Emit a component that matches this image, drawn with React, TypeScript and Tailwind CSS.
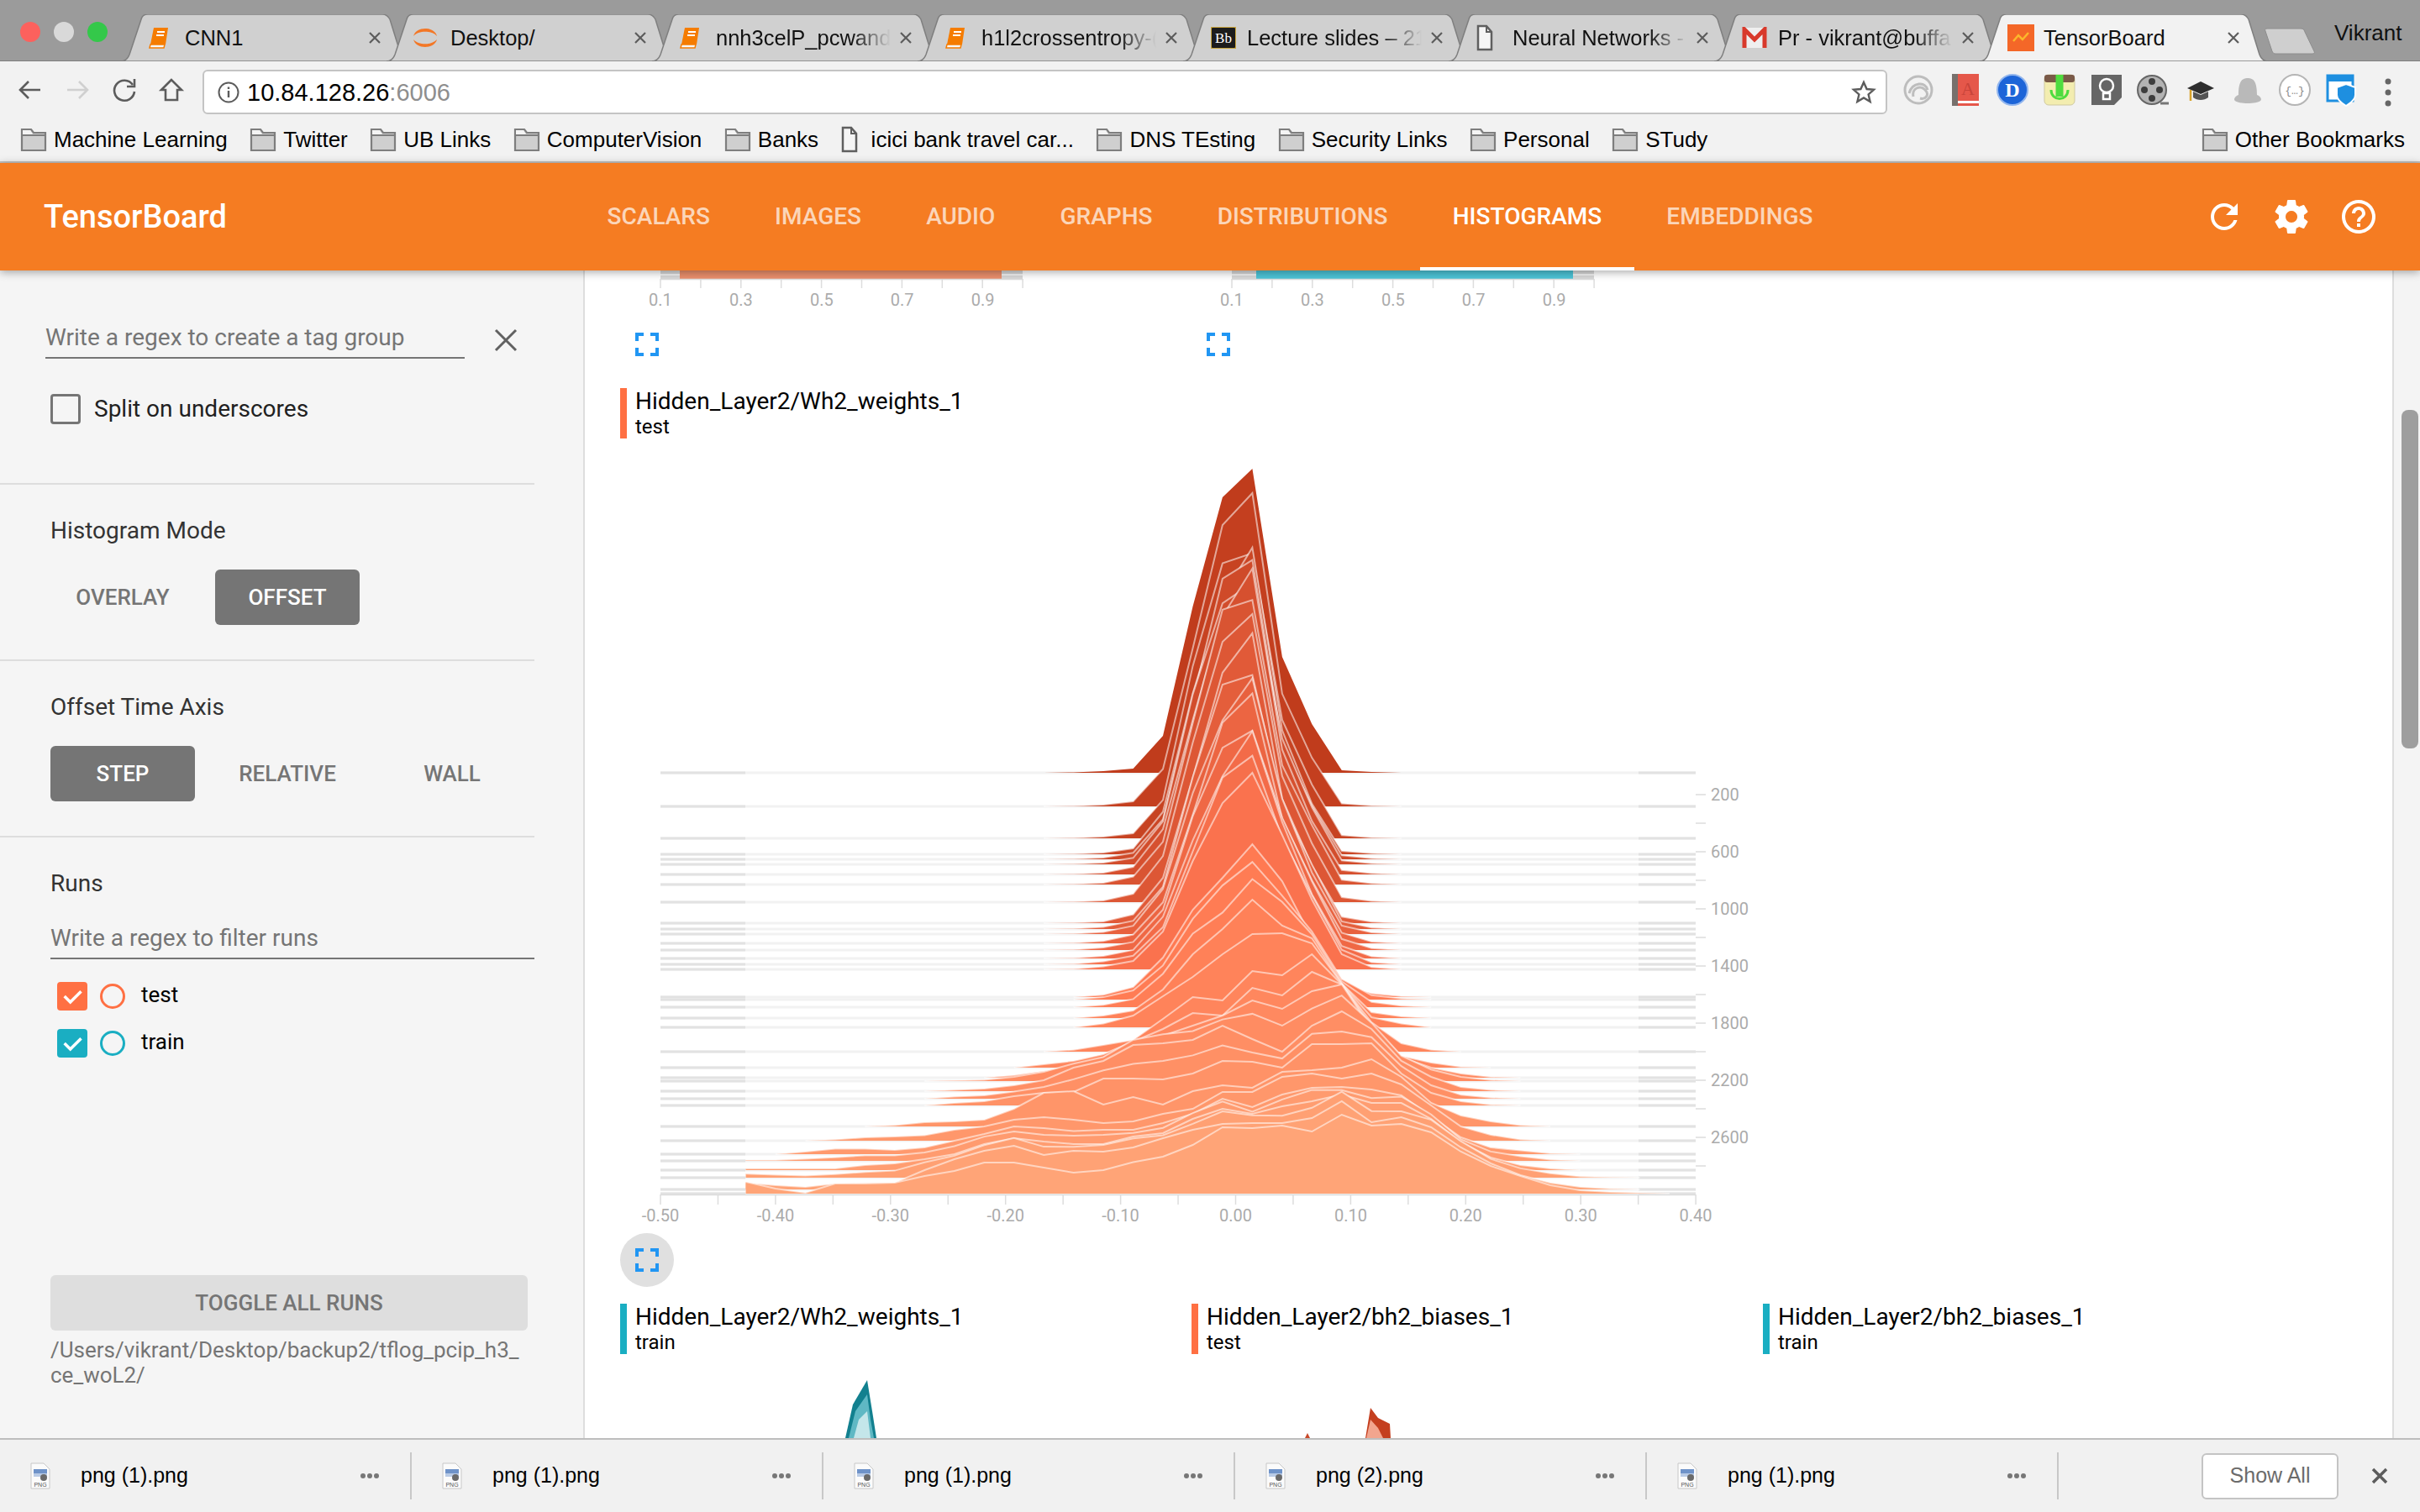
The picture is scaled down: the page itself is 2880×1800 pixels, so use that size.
import React from "react";

const tabs = [
  { title: "CNN1", icon: "book" },
  { title: "Desktop/", icon: "jupyter" },
  { title: "nnh3celP_pcwand", icon: "book", fade: true },
  { title: "h1l2crossentropy-(", icon: "book", fade: true },
  { title: "Lecture slides – 21", icon: "bb", fade: true },
  { title: "Neural Networks -", icon: "file", fade: true },
  { title: "Pr - vikrant@buffa", icon: "gmail", fade: true },
  { title: "TensorBoard", icon: "tb", active: true },
];

const bookmarks = [
  { label: "Machine Learning" },
  { label: "Twitter" },
  { label: "UB Links" },
  { label: "ComputerVision" },
  { label: "Banks" },
  { label: "icici bank travel car...", file: true },
  { label: "DNS TEsting" },
  { label: "Security Links" },
  { label: "Personal" },
  { label: "STudy" },
];

const navItems = ["SCALARS", "IMAGES", "AUDIO", "GRAPHS", "DISTRIBUTIONS", "HISTOGRAMS", "EMBEDDINGS"];
const downloads = ["png (1).png", "png (1).png", "png (1).png", "png (2).png", "png (1).png"];

// y of each histogram slice's baseline, back to front
const baselines = [
  920, 960, 998, 1017, 1023, 1029, 1041, 1053, 1074, 1099, 1106, 1112, 1123, 1131, 1141, 1148, 1154, 1187, 1190, 1199,
  1212, 1223, 1252, 1271, 1283, 1287, 1299, 1308, 1316, 1341, 1358, 1374, 1382, 1393, 1402, 1416, 1421,
];

// hand read slice outlines: heights above the baseline, per bin, starting at bin `from`
const keyRidges = [
  { i: 0, from: -7, h: [0, 0.5, 2, 5, 44, 198, 328, 362, 138, 58, 3, 1, 0] },
  { i: 8, from: -7, h: [0, 0.5, 2, 10, 55, 190, 310, 343, 150, 70, 6, 1.5, 0] },
  { i: 16, from: -7, h: [0, 0.5, 3.5, 10, 45, 129, 198, 234, 160, 83, 18, 2.7, 0] },
  { i: 17, from: -7, h: [0, 0, 2.7, 12, 47, 104, 142, 182, 138, 70, 15, 4.6, 1, 0] },
  { i: 20, from: -7, h: [0, 0, 3, 9, 34, 76, 106, 141, 110, 95, 41, 7, 2, 0] },
  { i: 21, from: -7, h: [0, 0, 4.6, 14, 37, 60, 87, 111, 112, 100, 52, 12, 4.6, 0] },
  { i: 22, from: -7, h: [0, 2.3, 8, 14, 39, 65, 61, 96, 91, 116, 80, 35, 10, 2.3, 0] },
  { i: 23, from: -8, h: [0, 4, 8, 16, 31, 46, 65, 62, 95, 86, 114, 99, 50, 14, 6, 1, 0] },
  { i: 24, from: -9, h: [0, 3, 8, 14, 24, 41, 50, 62, 74, 92, 82, 103, 111, 58, 24, 12, 5, 1, 0] },
  { i: 26, from: -11, h: [0, 1.5, 3, 7, 13, 28, 36, 55, 57, 61, 78, 62, 47, 78, 95, 74, 36, 17, 5, 1.5, 0] },
  { i: 28, from: -11, h: [0, 3, 5, 11, 15, 16, 32, 32, 31, 38, 53, 52, 45, 73, 73, 74, 38, 15, 5, 1, 0] },
  { i: 29, from: -13, h: [0, 1.5, 5, 6, 8, 21, 40, 42, 26, 35, 26, 42, 49, 46, 65, 67, 70, 80, 59, 28, 13, 6, 1.5, 0] },
  { i: 30, from: -15, h: [0, 1.5, 4, 5, 6.5, 13, 17, 25, 28, 25, 21, 23, 32, 38, 58, 58, 76, 80, 74, 80, 67, 42, 17, 7, 1.5, 0] },
  { i: 31, from: -16, h: [0, 3, 6.5, 6.5, 5, 8, 16, 24, 33, 31, 27.5, 29, 29, 37, 48, 66, 56, 71, 79, 80, 77, 70, 45, 20, 8, 4.6, 1, 0] },
  { i: 33, from: -17, h: [2, 2, 2, 2, 6, 8, 13, 19, 31, 38, 34, 31, 31, 40, 44, 61, 73, 67, 76, 82, 90, 80, 80, 61, 33, 15, 6, 2, 0] },
  { i: 35, from: -17, h: [8, 5, 3, 7, 8, 8, 23, 36, 46, 52, 41, 46, 45, 50, 61, 71, 78, 79, 79, 85, 105, 80, 86, 74, 50, 31, 17, 8, 3, 1, 0] },
  { i: 36, from: -17, h: [14, 6, 1, 12, 12, 13, 21, 27, 37, 37, 31, 25, 28, 37.5, 44, 58, 79, 78, 81, 74, 94, 81, 83, 73, 50, 33, 21, 10, 4, 2, 1, 0] },
];

const binX = (k: number) => 1490.4 + 35.46 * k;

function keyHeight(key: { from: number; h: number[] }, k: number) {
  const idx = k - key.from;
  return idx < 0 || idx >= key.h.length ? 0 : key.h[idx];
}

function ridgeHeights(i: number) {
  let a = keyRidges[0];
  let b = keyRidges[keyRidges.length - 1];
  for (let n = 0; n < keyRidges.length - 1; n++) {
    if (keyRidges[n].i <= i && keyRidges[n + 1].i >= i) {
      a = keyRidges[n];
      b = keyRidges[n + 1];
      break;
    }
  }
  const t = a.i === b.i ? 0 : (i - a.i) / (b.i - a.i);
  const isKey = t === 0 || t === 1;
  const out: [number, number][] = [];
  for (let k = -17; k <= 14; k++) {
    const base = keyHeight(a, k) * (1 - t) + keyHeight(b, k) * t;
    const wobble = isKey ? 1 : 1 + 0.05 * Math.sin(i * 2.3 + k * 1.7);
    out.push([k, base * wobble]);
  }
  return out;
}

function mix(c1: number[], c2: number[], t: number) {
  const p = c1.map((v, n) => Math.round(v + (c2[n] - v) * t));
  return `rgb(${p[0]},${p[1]},${p[2]})`;
}

function ridgeColor(i: number) {
  if (i <= 16) return mix([192, 60, 28], [250, 114, 78], i / 16);
  return mix([255, 122, 82], [255, 164, 119], (i - 17) / 19);
}

function Ridge({ i }: { i: number }) {
  const base = baselines[i];
  const heights = ridgeHeights(i);
  const first = heights.findIndex(([, h]) => h > 0);
  let last = heights.length - 1;
  while (last > 0 && heights[last][1] <= 0) last--;
  const from = Math.max(first - 1, 0);
  const to = Math.min(last + 1, heights.length - 1);
  const pts = heights.slice(from, to + 1).map(([k, h]) => `${binX(k).toFixed(1)},${(base - h).toFixed(1)}`);
  const startX = first === 0 ? binX(-17) : binX(heights[from][0]);
  const endX = binX(heights[to][0]);
  return (
    <g>
      <polygon points={`${startX},${base} ${pts.join(" ")} ${endX},${base}`} fill={ridgeColor(i)} />
      {i > 0 && <polyline points={pts.join(" ")} fill="none" stroke="#ffffff" strokeOpacity={0.55} strokeWidth={2} />}
    </g>
  );
}

function MainChart() {
  const xLabels = ["-0.50", "-0.40", "-0.30", "-0.20", "-0.10", "0.00", "0.10", "0.20", "0.30", "0.40"];
  const yLabels = ["200", "600", "1000", "1400", "1800", "2200", "2600"];
  return (
    <svg className="block w-[1400px] h-[946px]" viewBox="696 522 1400 946">
      {baselines.map((y, i) => (
        <g key={i}>
          <rect x={786} y={y - 1.5} width={1232} height={3} fill="#f2f2f2" />
          <rect x={786} y={y - 1.5} width={101} height={3} fill="#e2e2e2" />
          <rect x={1950} y={y - 1.5} width={68} height={3} fill="#e2e2e2" />
        </g>
      ))}
      {baselines.map((_, i) => (
        <Ridge key={i} i={i} />
      ))}
      <line x1={786} x2={2018} y1={1422.5} y2={1422.5} stroke="#dddddd" strokeWidth={1.5} />
      {Array.from({ length: 19 }).map((_, n) => (
        <line key={n} x1={786 + 68.45 * n} x2={786 + 68.45 * n} y1={1422} y2={1434} stroke="#dddddd" strokeWidth={1.5} />
      ))}
      {xLabels.map((l, n) => (
        <text key={l} x={786 + 136.9 * n} y={1454} textAnchor="middle" fontSize={20} fill="#ababab" fontFamily="Roboto, sans-serif">
          {l}
        </text>
      ))}
      {Array.from({ length: 14 }).map((_, n) => (
        <line key={n} x1={2018} x2={2030} y1={946 + 34 * n} y2={946 + 34 * n} stroke="#dddddd" strokeWidth={1.5} />
      ))}
      {yLabels.map((l, n) => (
        <text key={l} x={2036} y={953 + 68 * n} fontSize={20} fill="#ababab" fontFamily="Roboto, sans-serif">
          {l}
        </text>
      ))}
    </svg>
  );
}

function TopCharts() {
  const cards = [
    { dx: 0, a: 809, b: 1192, fill: "#ea8f6c" },
    { dx: 680, a: 815, b: 1192, fill: "#4cc3d6" },
  ];
  const labels = ["0.1", "0.3", "0.5", "0.7", "0.9"];
  return (
    <svg className="block w-[1400px] h-[74px]" viewBox="696 322 1400 74">
      {cards.map((c) => (
        <g key={c.dx} transform={`translate(${c.dx} 0)`}>
          <rect x={786} y={322} width={431} height={10} fill="#d8d8d8" />
          <rect x={786} y={326} width={431} height={2} fill="#f4f4f4" />
          <rect x={c.a} y={322} width={c.b - c.a} height={10} fill={c.fill} />
          <line x1={786} x2={1217} y1={332.5} y2={332.5} stroke="#dddddd" strokeWidth={1.5} />
          {Array.from({ length: 10 }).map((_, n) => (
            <line key={n} x1={786 + 47.9 * n} x2={786 + 47.9 * n} y1={332} y2={343} stroke="#dddddd" strokeWidth={1.5} />
          ))}
          {labels.map((l, n) => (
            <text key={l} x={786 + 95.9 * n} y={364} textAnchor="middle" fontSize={20} fill="#ababab" fontFamily="Roboto, sans-serif">
              {l}
            </text>
          ))}
        </g>
      ))}
    </svg>
  );
}

function BottomCharts() {
  return (
    <svg className="block w-[1400px] h-[100px]" viewBox="696 1612 1400 100">
      <polygon points="1006,1712 1015,1672 1032,1643 1038,1680 1043,1712" fill="#12808f" />
      <polygon points="1010,1712 1018,1680 1032,1660 1036,1690 1040,1712" fill="#5fb8c4" />
      <polygon points="1016,1712 1022,1690 1032,1680 1036,1712" fill="#c4e6ea" />
      <polygon points="1553,1712 1556,1706 1559,1712" fill="#c8492a" />
      <polygon points="1625,1712 1631,1676 1640,1688 1654,1695 1655,1712" fill="#c43f1f" />
      <polygon points="1626,1712 1631,1690 1640,1700 1646,1712" fill="#f2a58e" />
      <polygon points="2244,1712 2247,1706 2250,1712" fill="#12808f" />
      <polygon points="2323,1712 2333,1680 2345,1690 2358,1695 2359,1712" fill="#12808f" />
      <polygon points="2324,1712 2333,1695 2345,1712" fill="#8fd0d9" />
    </svg>
  );
}

function FullscreenIcon() {
  return (
    <svg viewBox="5 5 14 14" className="block w-7 h-7" fill="#2196f3">
      <path d="M7 14H5v5h5v-2H7v-3zm-2-4h2V7h3V5H5v5zm12 7h-3v2h5v-5h-2v3zM14 5v2h3v3h2V5h-5z" />
    </svg>
  );
}

function CardLabel({ title, run, color }: { title: string; run: string; color: string }) {
  return (
    <div className="flex w-[680px] h-[60px]">
      <div className={`w-2 h-full ${color}`} />
      <div className="ml-[10px] flex flex-col text-black">
        <div className="text-[28px] leading-8 font-['Roboto',sans-serif]">{title}</div>
        <div className="text-[24px] leading-7 font-['Roboto',sans-serif]">{run}</div>
      </div>
    </div>
  );
}

function Favicon({ kind }: { kind: string }) {
  if (kind === "book")
    return (
      <svg viewBox="0 0 26 26" className="w-[26px] h-[26px] shrink-0">
        <path d="M6 1h17l-3 20H2z" fill="#f57c00" />
        <path d="M2 21h17l-1 4H1z" fill="#f8f8f8" stroke="#f57c00" strokeWidth="1.5" />
        <path d="M10 6h9M9 10h9" stroke="#fff" strokeWidth="2" />
      </svg>
    );
  if (kind === "jupyter")
    return (
      <svg viewBox="0 0 30 30" className="w-[30px] h-[30px] shrink-0 -ml-[2px]">
        <path d="M1 13C4 1 26 1 29 13 23 6 7 6 1 13z" fill="#f37726" />
        <path d="M1 17C4 29 26 29 29 17 23 24 7 24 1 17z" fill="#f37726" />
      </svg>
    );
  if (kind === "bb")
    return (
      <svg viewBox="0 0 30 26" className="w-[30px] h-[26px] shrink-0">
        <rect width="30" height="26" rx="2" fill="#1c1c1c" stroke="#c9a53c" strokeWidth="2" />
        <text x="15" y="19" textAnchor="middle" fontSize="17" fill="#fff" fontFamily="Liberation Serif, serif">
          Bb
        </text>
      </svg>
    );
  if (kind === "file") return <PageIcon />;
  if (kind === "gmail")
    return (
      <svg viewBox="0 0 30 26" className="w-[30px] h-[26px] shrink-0">
        <rect x="1" y="1" width="28" height="24" fill="#efefef" />
        <path d="M3 25V3l12 12L27 3v22" fill="none" stroke="#d8392b" strokeWidth="5" />
      </svg>
    );
  return (
    <svg viewBox="0 0 32 32" className="w-8 h-8 shrink-0">
      <rect width="32" height="32" fill="#f46728" />
      <path d="M7 20l6-7 5 5 7-8" fill="none" stroke="#fcb72c" strokeWidth="2.5" />
    </svg>
  );
}

function PageIcon() {
  return (
    <svg viewBox="0 0 20 32" className="w-5 h-8 shrink-0">
      <path d="M2 2h10l6 7v21H2z" fill="#f5f5f5" stroke="#5f5f5f" strokeWidth="2.5" />
      <path d="M12 2v7h6" fill="none" stroke="#5f5f5f" strokeWidth="2" />
    </svg>
  );
}

function TabItem({ title, icon, fade, active }: { title: string; icon: string; fade?: boolean; active?: boolean }) {
  return (
    <div className={`relative w-[343px] h-14 -mr-[27px] shrink-0 ${active ? "z-10" : ""}`}>
      <svg viewBox="0 0 343 56" className="absolute inset-0 w-full h-full">
        <path
          d="M0 56C5 56 8 53 10 48L24 6C25 2 28 0 32 0H311C316 0 318 2 320 6L333 48C335 53 338 56 343 56Z"
          fill={active ? "#f2f2f2" : "#d0d0d0"}
          stroke="#7f7f7f"
          strokeWidth="1.5"
        />
      </svg>
      <div className="relative flex items-center h-full pl-[33px]">
        <div className="w-[43px] flex items-center shrink-0">
          <Favicon kind={icon} />
        </div>
        <div
          className={`w-[208px] whitespace-nowrap text-[25.5px] text-[#111] font-['Liberation_Sans',sans-serif] ${
            fade ? "[mask-image:linear-gradient(to_right,black_78%,transparent_100%)]" : ""
          }`}
        >
          {title}
        </div>
        <svg viewBox="0 0 16 16" className="w-4 h-4 ml-[10px] shrink-0" stroke="#5c5c5c" strokeWidth="2.2">
          <path d="M2 2l12 12M14 2L2 14" />
        </svg>
      </div>
    </div>
  );
}

function FolderIcon() {
  return (
    <svg viewBox="0 0 32 32" className="w-8 h-8 shrink-0">
      <path d="M2 29V4h11l3 4h14v21z" fill="#cfcfcf" stroke="#7e7e7e" strokeWidth="2.2" />
      <path d="M2 11h28" stroke="#7e7e7e" strokeWidth="2" />
      <path d="M3 5h9l3 5H3z" fill="#f4f4f4" />
    </svg>
  );
}

function ExtensionIcons() {
  return (
    <div className="flex items-center gap-4 ml-[17px]">
      <svg viewBox="0 0 40 40" className="w-10 h-10">
        <circle cx="20" cy="20" r="16" fill="none" stroke="#bdbdbd" strokeWidth="3" />
        <path d="M9 24c4-14 20-14 22-4M14 28c-2-10 8-14 14-8s0 12-6 10" fill="none" stroke="#bdbdbd" strokeWidth="3" />
      </svg>
      <svg viewBox="0 0 40 40" className="w-10 h-10">
        <rect x="4" y="1" width="32" height="38" fill="#e5574a" />
        <rect x="4" y="1" width="7" height="38" fill="#77706c" />
        <rect x="11" y="33" width="25" height="3" fill="#fff" />
        <text x="23" y="26" textAnchor="middle" fontSize="22" fill="#c8443a" fontFamily="Liberation Serif, serif">
          A
        </text>
      </svg>
      <svg viewBox="0 0 40 40" className="w-10 h-10">
        <circle cx="20" cy="20" r="18" fill="#1d65d8" stroke="#92b6ee" strokeWidth="2" />
        <text x="20" y="28" textAnchor="middle" fontSize="24" fontWeight="700" fill="#fff" fontFamily="Liberation Serif, serif">
          D
        </text>
      </svg>
      <svg viewBox="0 0 40 40" className="w-10 h-10">
        <rect x="2" y="2" width="36" height="36" rx="5" fill="#f3edb0" stroke="#cfc9a0" />
        <rect x="2" y="2" width="36" height="9" rx="3" fill="#7a5a48" />
        <path d="M20 2v26" stroke="#4fdc3f" strokeWidth="9" />
        <path d="M10 20c0 14 20 14 20 0" fill="none" stroke="#4fdc3f" strokeWidth="3" />
      </svg>
      <svg viewBox="0 0 40 40" className="w-10 h-10">
        <path d="M2 2h36v27l-9 9H2z" fill="#666666" />
        <circle cx="20" cy="15" r="8" fill="none" stroke="#fff" strokeWidth="2.5" />
        <path d="M16 24h8v7h-8z" fill="none" stroke="#fff" strokeWidth="2.5" />
      </svg>
      <svg viewBox="0 0 40 40" className="w-10 h-10">
        <circle cx="18" cy="20" r="17" fill="#b3b3b3" stroke="#666" strokeWidth="2" />
        <circle cx="18" cy="10" r="4" fill="#3d3d3d" />
        <circle cx="18" cy="30" r="4" fill="#3d3d3d" />
        <circle cx="9" cy="20" r="4" fill="#3d3d3d" />
        <circle cx="27" cy="20" r="4" fill="#3d3d3d" />
        <path d="M28 36h10" stroke="#777" strokeWidth="3" />
      </svg>
      <svg viewBox="0 0 40 40" className="w-10 h-10">
        <path d="M20 10L36 18 20 25 4 18z" fill="#2e2e2e" />
        <path d="M11 22v7c5 4 13 4 18 0v-7l-9 4z" fill="#555" />
        <path d="M8 20v13" stroke="#d9a32b" strokeWidth="2.5" />
      </svg>
      <svg viewBox="0 0 40 40" className="w-10 h-10">
        <path d="M9 26C9 10 13 6 20 6s11 4 11 20c5 2 6 6 4 7-4 4-26 4-30 0-2-1-1-5 4-7z" fill="#b9b9b9" />
      </svg>
      <svg viewBox="0 0 40 40" className="w-10 h-10">
        <circle cx="20" cy="20" r="18" fill="#fff" stroke="#b5b5b5" strokeWidth="2" />
        <text x="20" y="25" textAnchor="middle" fontSize="13" fill="#8a8a8a" fontFamily="Liberation Mono, monospace">
          {"{…}"}
        </text>
      </svg>
      <svg viewBox="0 0 40 40" className="w-10 h-10">
        <rect x="3" y="3" width="30" height="30" fill="#fff" stroke="#1e8fe0" strokeWidth="3" />
        <rect x="3" y="3" width="30" height="7" fill="#1e8fe0" />
        <path d="M14 17l11-4 11 4v9c0 6-6 10-11 13-5-3-11-7-11-13z" fill="#1e8fe0" stroke="#fff" strokeWidth="2" />
      </svg>
    </div>
  );
}

function BrowserChrome() {
  return (
    <div className="font-['Liberation_Sans',sans-serif]">
      <div className="relative flex h-[73px] bg-[#9b9b9b] border-b-[1.5px] border-[#7f7f7f]">
        <div className="w-[144px] shrink-0 flex gap-4 pl-6 pt-[26px]">
          <div className="w-6 h-6 rounded-full bg-[#fc615d]" />
          <div className="w-6 h-6 rounded-full bg-[#d9d9d9]" />
          <div className="w-6 h-6 rounded-full bg-[#34c84a]" />
        </div>
        <div className="flex pt-[17px]">
          {tabs.map((t) => (
            <TabItem key={t.title} {...t} />
          ))}
        </div>
        <svg viewBox="0 0 64 32" className="w-16 h-8 ml-[22px] mt-[33px] shrink-0">
          <path d="M4 1H44C47 1 48 2 49 5L60 28C61 30 60 31 58 31H14C12 31 11 30 10 28L2 4C1 2 2 1 4 1Z" fill="#cfcfcf" stroke="#8d8d8d" />
        </svg>
        <div className="ml-5 pt-[23px] text-[26px] leading-8 text-[#111]">Vikrant</div>
      </div>
      <div className="flex h-[67px] bg-[#f2f2f2]">
        <div className="w-[241px] shrink-0 flex items-center pl-[20px] gap-6">
          <svg viewBox="0 0 32 32" className="w-8 h-8" fill="none" stroke="#5c5c5c" strokeWidth="2.6">
            <path d="M28 16H5M14 6L4 16l10 10" />
          </svg>
          <svg viewBox="0 0 32 32" className="w-8 h-8" fill="none" stroke="#d0d0d0" strokeWidth="2.6">
            <path d="M4 16h23M18 6l10 10-10 10" />
          </svg>
          <svg viewBox="0 0 32 32" className="w-8 h-8" fill="none" stroke="#5c5c5c" strokeWidth="2.6">
            <path d="M26 10a12 12 0 1 0 2 8" />
            <path d="M28 3v9h-9" />
          </svg>
          <svg viewBox="0 0 32 32" className="w-8 h-8" fill="none" stroke="#5c5c5c" strokeWidth="2.6">
            <path d="M16 4L4 16h5v12h14V16h5z" />
          </svg>
        </div>
        <div className="mt-[10px] h-[53px] w-[2005px] shrink-0 flex items-center bg-white border-2 border-[#c4c4c4] rounded-md pl-4 pr-[11px]">
          <svg viewBox="0 0 26 26" className="w-[26px] h-[26px] shrink-0" fill="none" stroke="#5c5c5c" strokeWidth="2">
            <circle cx="13" cy="13" r="11.5" />
            <path d="M13 11v8M13 6.5v2.5" strokeWidth="2.4" />
          </svg>
          <div className="ml-[9px] mt-[2px] text-[29px] text-black">
            10.84.128.26<span className="text-[#8e8e8e]">:6006</span>
          </div>
          <svg viewBox="0 0 30 30" className="w-[30px] h-[30px] ml-auto" fill="none" stroke="#5c5c5c" strokeWidth="2.4">
            <path d="M15 3l3.6 8 8.4.8-6.4 5.6 2 8.6-7.6-4.6L7.4 26l2-8.6L3 11.8l8.4-.8z" />
          </svg>
        </div>
        <ExtensionIcons />
        <svg viewBox="0 0 10 36" className="w-[10px] h-9 ml-[30px] mt-[19px]" fill="#666">
          <circle cx="5" cy="5" r="3.5" />
          <circle cx="5" cy="18" r="3.5" />
          <circle cx="5" cy="31" r="3.5" />
        </svg>
      </div>
      <div className="flex items-center gap-[26.5px] h-[54px] pl-6 pr-[18px] bg-[#f2f2f2] border-b-2 border-[#c0c0c0] text-[26px] text-black">
        {bookmarks.map((b) => (
          <div key={b.label} className="flex items-center gap-2 whitespace-nowrap">
            {b.file ? <PageIcon /> : <FolderIcon />}
            <span className={b.file ? "ml-2" : ""}>{b.label}</span>
          </div>
        ))}
        <div className="ml-auto flex items-center gap-2 whitespace-nowrap">
          <FolderIcon />
          <span>Other Bookmarks</span>
        </div>
      </div>
    </div>
  );
}

function TopBar() {
  return (
    <header className="relative z-20 flex items-center h-[128px] bg-[#f57c22] shadow-[0_2px_10px_rgba(0,0,0,0.35)] font-['Roboto',sans-serif]">
      <div className="w-[684px] pl-[52px] shrink-0 text-[38px] font-medium text-white">TensorBoard</div>
      <nav className="flex h-full">
        {navItems.map((item) => (
          <div
            key={item}
            className={`relative flex items-center px-[38.6px] text-[28px] font-medium ${
              item === "HISTOGRAMS" ? "text-white" : "text-white/70"
            }`}
          >
            {item}
            {item === "HISTOGRAMS" && <div className="absolute left-0 right-0 bottom-0 h-1 bg-white" />}
          </div>
        ))}
      </nav>
      <div className="ml-auto flex items-center gap-8 pr-[49px]">
        <svg viewBox="0 0 24 24" className="w-12 h-12" fill="#fff">
          <path d="M17.65 6.35C16.2 4.9 14.21 4 12 4c-4.42 0-7.99 3.58-7.99 8s3.57 8 7.99 8c3.73 0 6.84-2.55 7.73-6h-2.08c-.82 2.33-3.04 4-5.65 4-3.31 0-6-2.69-6-6s2.69-6 6-6c1.66 0 3.14.69 4.22 1.78L13 11h7V4l-2.35 2.35z" />
        </svg>
        <svg viewBox="0 0 24 24" className="w-12 h-12" fill="#fff">
          <path d="M19.43 12.98c.04-.32.07-.64.07-.98s-.03-.66-.07-.98l2.11-1.65c.19-.15.24-.42.12-.64l-2-3.46c-.12-.22-.39-.3-.61-.22l-2.49 1c-.52-.4-1.08-.73-1.69-.98l-.38-2.65C14.46 2.18 14.25 2 14 2h-4c-.25 0-.46.18-.49.42l-.38 2.65c-.61.25-1.17.59-1.69.98l-2.49-1c-.23-.09-.49 0-.61.22l-2 3.46c-.13.22-.07.49.12.64l2.11 1.65c-.04.32-.07.65-.07.98s.03.66.07.98l-2.11 1.65c-.19.15-.24.42-.12.64l2 3.46c.12.22.39.3.61.22l2.49-1c.52.4 1.08.73 1.69.98l.38 2.65c.03.24.24.42.49.42h4c.25 0 .46-.18.49-.42l.38-2.65c.61-.25 1.17-.59 1.69-.98l2.49 1c.23.09.49 0 .61-.22l2-3.46c.12-.22.07-.49-.12-.64l-2.11-1.65zM12 15.5c-1.93 0-3.5-1.57-3.5-3.5s1.57-3.5 3.5-3.5 3.5 1.57 3.5 3.5-1.57 3.5-3.5 3.5z" />
        </svg>
        <svg viewBox="0 0 24 24" className="w-12 h-12" fill="#fff">
          <path d="M11 18h2v-2h-2v2zm1-16C6.48 2 2 6.48 2 12s4.48 10 10 10 10-4.48 10-10S17.52 2 12 2zm0 18c-4.41 0-8-3.59-8-8s3.59-8 8-8 8 3.59 8 8-3.59 8-8 8zm0-14c-2.21 0-4 1.79-4 4h2c0-1.1.9-2 2-2s2 .9 2 2c0 2-3 1.75-3 5h2c0-2.25 3-2.5 3-5 0-2.21-1.79-4-4-4z" />
        </svg>
      </div>
    </header>
  );
}

function RunRow({ name, box, ring }: { name: string; box: string; ring: string }) {
  return (
    <div className="flex items-center h-9 pl-2">
      <div className={`w-9 h-[34px] rounded-[4px] flex items-center justify-center ${box}`}>
        <svg viewBox="0 0 24 24" className="w-7 h-7" fill="none" stroke="#fff" strokeWidth="3">
          <path d="M4 12l6 6L21 7" />
        </svg>
      </div>
      <div className={`ml-[15px] w-[30px] h-[30px] rounded-full border-[3px] ${ring}`} />
      <div className="ml-[19px] -mt-1 text-[26px] text-black">{name}</div>
    </div>
  );
}

function ModeSection({ title, options, selected }: { title: string; options: string[]; selected: string }) {
  return (
    <div className="h-[210px] w-[636px] shrink-0 pl-[60px] pt-[35px] border-b-2 border-[#dddddd]">
      <div className="text-[28px] leading-10 text-[#333]">{title}</div>
      <div className="flex gap-6 mt-[26px]">
        {options.map((o) => (
          <div
            key={o}
            className={`flex items-center justify-center w-[172px] h-[66px] rounded-md text-[26px] font-medium ${
              o === selected ? "bg-[#757575] text-white" : "text-[#757575]"
            }`}
          >
            {o}
          </div>
        ))}
      </div>
    </div>
  );
}

function Sidebar() {
  return (
    <aside className="flex flex-col w-[696px] shrink-0 bg-[#f5f5f5] border-r-2 border-[#dddddd] font-['Roboto',sans-serif]">
      <div className="h-[255px] w-[636px] shrink-0 border-b-2 border-[#dddddd]">
        <div className="flex items-center mt-[60px] pl-[54px]">
          <div className="w-[499px] h-[45px] border-b-2 border-[#757575] text-[28px] leading-10 text-[#757575]">
            Write a regex to create a tag group
          </div>
          <svg viewBox="0 0 28 28" className="w-7 h-7 ml-[35px]" stroke="#616161" strokeWidth="3">
            <path d="M2 2l24 24M26 2L2 26" />
          </svg>
        </div>
        <div className="flex items-center mt-[39px] pl-[60px]">
          <div className="w-9 h-9 rounded-[4px] border-[3px] border-[#757575]" />
          <div className="ml-4 text-[28px] text-[#212121]">Split on underscores</div>
        </div>
      </div>
      <ModeSection title="Histogram Mode" options={["OVERLAY", "OFFSET"]} selected="OFFSET" />
      <ModeSection title="Offset Time Axis" options={["STEP", "RELATIVE", "WALL"]} selected="STEP" />
      <div className="flex flex-col flex-1 pl-[60px] pt-[35px] pb-[60px]">
        <div className="text-[28px] leading-10 text-[#333]">Runs</div>
        <div className="w-[576px] h-[56px] mt-[14px] border-b-2 border-[#757575] text-[28px] leading-[62px] text-[#757575]">
          Write a regex to filter runs
        </div>
        <div className="flex flex-col gap-[20px] mt-[26px]">
          <RunRow name="test" box="bg-[#ff7043]" ring="border-[#ff7043]" />
          <RunRow name="train" box="bg-[#1aaec2]" ring="border-[#1aaec2]" />
        </div>
        <div className="mt-auto flex items-center justify-center w-[568px] h-[66px] rounded-md bg-[#dedede] text-[26px] font-medium text-[#757575]">
          TOGGLE ALL RUNS
        </div>
        <div className="w-[570px] mt-2 text-[26px] leading-[30px] text-[#757575] break-all">
          /Users/vikrant/Desktop/backup2/tflog_pcip_h3_ce_woL2/
        </div>
      </div>
    </aside>
  );
}

function Content() {
  return (
    <main className="flex-1 min-w-0 overflow-hidden bg-white font-['Roboto',sans-serif]">
      <TopCharts />
      <div className="flex pl-[60px] h-[66px]">
        <div className="w-[680px]">
          <FullscreenIcon />
        </div>
        <FullscreenIcon />
      </div>
      <div className="pl-[42px]">
        <CardLabel title="Hidden_Layer2/Wh2_weights_1" run="test" color="bg-[#ff7043]" />
      </div>
      <MainChart />
      <div className="ml-[42px] w-16 h-16 rounded-full bg-[#e0e0e0] flex items-center justify-center">
        <FullscreenIcon />
      </div>
      <div className="flex pl-[42px] mt-5">
        <CardLabel title="Hidden_Layer2/Wh2_weights_1" run="train" color="bg-[#1aaec2]" />
        <CardLabel title="Hidden_Layer2/bh2_biases_1" run="test" color="bg-[#ff7043]" />
        <CardLabel title="Hidden_Layer2/bh2_biases_1" run="train" color="bg-[#1aaec2]" />
      </div>
      <BottomCharts />
    </main>
  );
}

function DownloadIcon() {
  return (
    <svg viewBox="0 0 24 32" className="w-6 h-8 shrink-0">
      <path d="M1 1h15l7 7v23H1z" fill="#fbfbfb" stroke="#c8c8c8" />
      <rect x="4" y="8" width="16" height="5" fill="#6f93c9" />
      <rect x="4" y="13" width="16" height="4" fill="#b9cbe6" />
      <circle cx="16" cy="18" r="4" fill="#6a6a6a" />
      <text x="12" y="29" textAnchor="middle" fontSize="7" fill="#555" fontFamily="Liberation Sans, sans-serif">
        PNG
      </text>
    </svg>
  );
}

function DownloadBar() {
  return (
    <footer className="flex items-center h-[88px] bg-[#f1f1f1] border-t-2 border-[#bdbdbd] font-['Liberation_Sans',sans-serif]">
      {downloads.map((d, n) => (
        <div key={n} className="flex items-center w-[490px] h-14 pl-9 pr-[37px] border-r-2 border-[#c8c8c8]">
          <DownloadIcon />
          <div className="ml-9 text-[25px] text-black">{d}</div>
          <svg viewBox="0 0 22 6" className="ml-auto w-[22px] h-[6px]" fill="#777">
            <circle cx="3" cy="3" r="3" />
            <circle cx="11" cy="3" r="3" />
            <circle cx="19" cy="3" r="3" />
          </svg>
        </div>
      ))}
      <div className="ml-auto flex items-center justify-center w-[163px] h-[55px] rounded-md bg-white border-2 border-[#c4c4c4] text-[25px] text-[#6b6b6b]">
        Show All
      </div>
      <svg viewBox="0 0 20 20" className="w-5 h-5 ml-[39px] mr-[38px]" stroke="#5c5c5c" strokeWidth="3.5">
        <path d="M2 2l16 16M18 2L2 18" />
      </svg>
    </footer>
  );
}

export default function App() {
  return (
    <div className="flex flex-col w-[2880px] h-[1800px] overflow-hidden bg-white">
      <BrowserChrome />
      <TopBar />
      <div className="flex flex-1 min-h-0">
        <Sidebar />
        <Content />
        <div className="w-[33px] shrink-0 bg-[#f4f4f4] border-l-2 border-[#dddddd] pl-[9px] pt-[166px]">
          <div className="w-5 h-[403px] rounded-lg bg-[#9e9e9e]" />
        </div>
      </div>
      <DownloadBar />
    </div>
  );
}
